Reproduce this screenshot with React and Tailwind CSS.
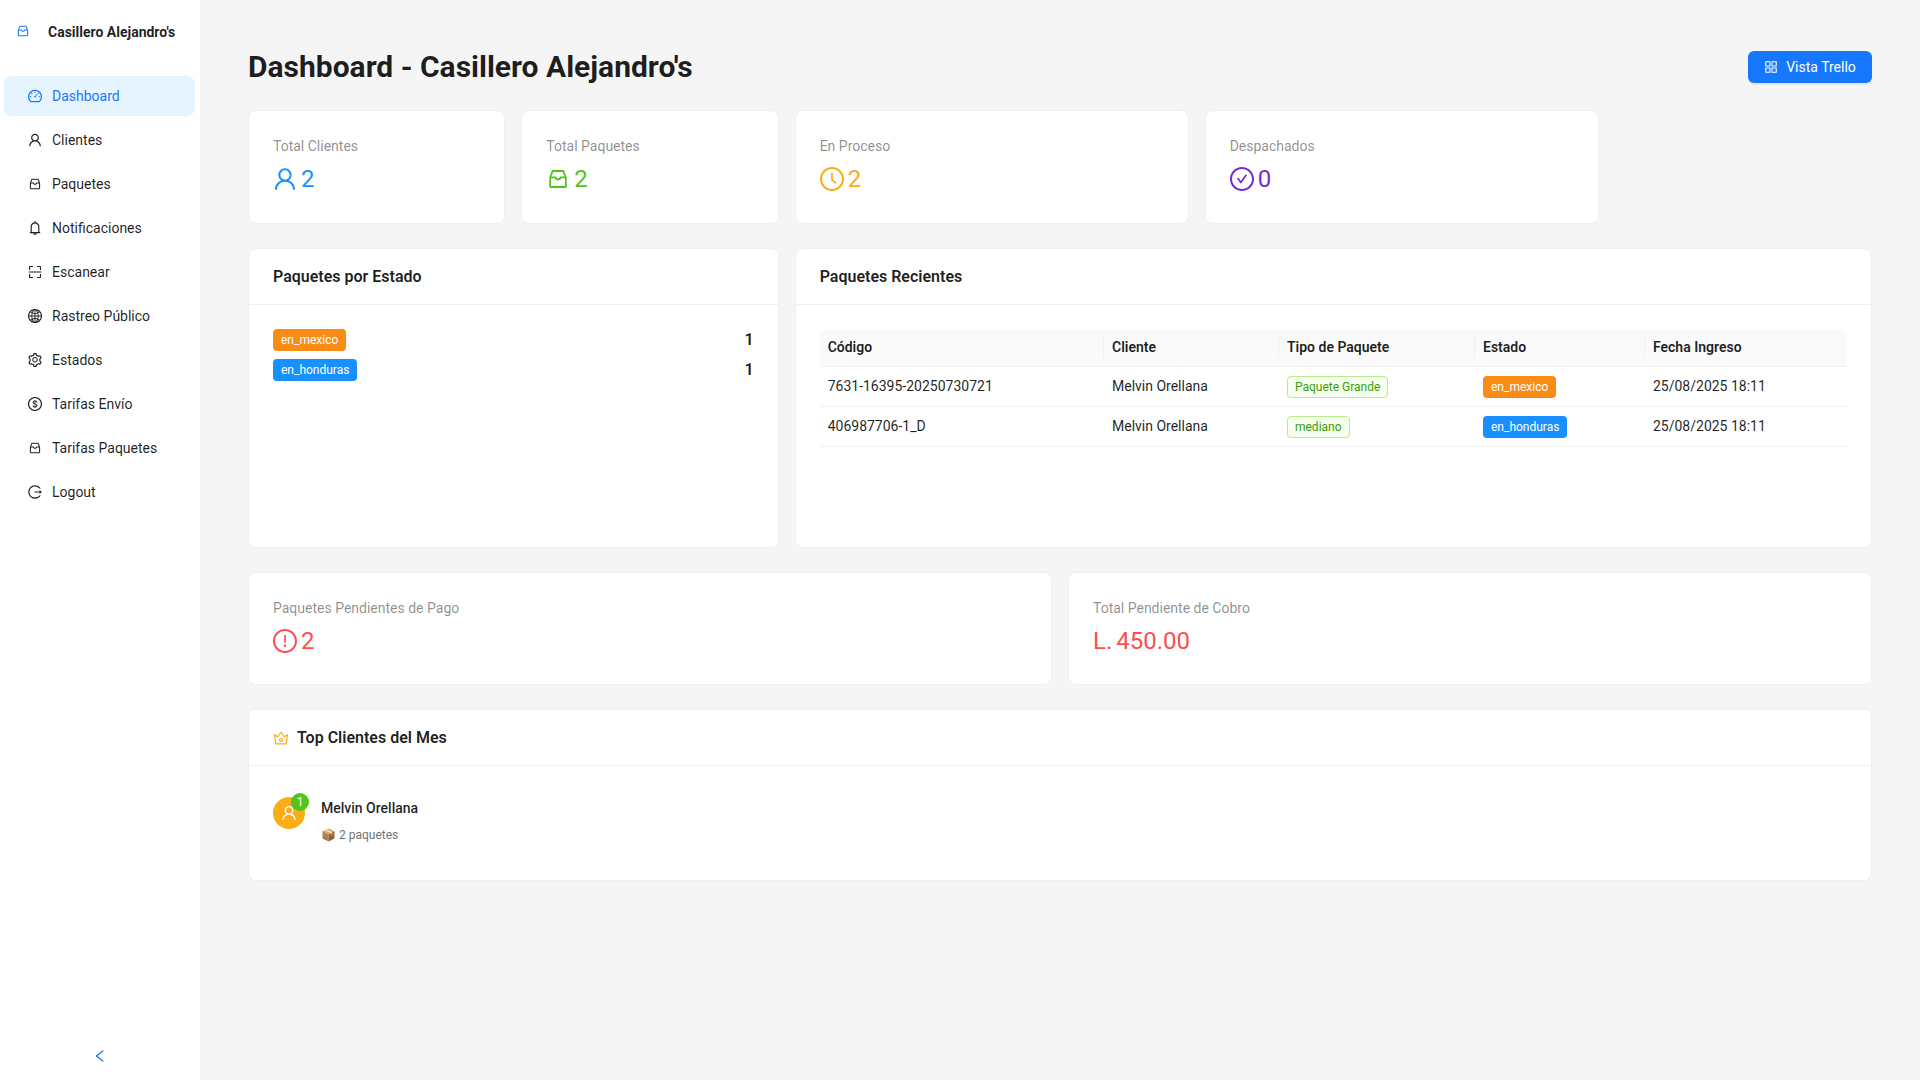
import React from "react";
import {
  AiOutlineDashboard, AiOutlineUser, AiOutlineInbox, AiOutlineBell, AiOutlineScan,
  AiOutlineGlobal, AiOutlineSetting, AiOutlineDollar, AiOutlineLogout, AiOutlineAppstore,
  AiOutlineClockCircle, AiOutlineCheckCircle, AiOutlineExclamationCircle, AiOutlineCrown, AiOutlineLeft,
} from "react-icons/ai";

const menu = [
  [AiOutlineDashboard, "Dashboard", "scale-[1.143]"],
  [AiOutlineUser, "Clientes", "scale-[1.143]"],
  [AiOutlineInbox, "Paquetes", ""],
  [AiOutlineBell, "Notificaciones", "scale-[1.143]"],
  [AiOutlineScan, "Escanear", "scale-[1.143]"],
  [AiOutlineGlobal, "Rastreo Público", "scale-[1.143]"],
  [AiOutlineSetting, "Estados", "scale-[1.143]"],
  [AiOutlineDollar, "Tarifas Envío", "scale-[1.143]"],
  [AiOutlineInbox, "Tarifas Paquetes", ""],
  [AiOutlineLogout, "Logout", "scale-[1.143]"],
];

function Sidebar() {
  return (
    <aside className="w-[200px] shrink-0 h-screen bg-white flex flex-col">
      <div className="h-[64px] flex items-center pl-[16px] gap-[18px]">
        <AiOutlineInbox className="text-[14px] text-[#1677ff] -mt-[2px]" />
        <span className="text-[14px] font-bold text-[#000000e0] whitespace-nowrap">Casillero Alejandro's</span>
      </div>
      <nav className="flex flex-col gap-[4px] ml-[4px] mr-[5px] mt-[12px]">
        {menu.map(([Icon, label, scale], i) => (
          <div
            key={label}
            className={`h-[40px] rounded-[8px] flex items-center pl-[24px] gap-[10px] text-[14px] ${
              i === 0 ? "bg-[#e6f4ff] text-[#1677ff]" : "text-[#000000e0]"
            }`}
          >
            <Icon className={`${scale} text-[14px]`} />
            <span>{label}</span>
          </div>
        ))}
      </nav>
      <div className="mt-auto h-[48px] flex items-center justify-center text-[#1677ff]">
        <AiOutlineLeft className="scale-[1.143] text-[14px]" />
      </div>
    </aside>
  );
}

function Card({ className = "", children }) {
  return (
    <div className={`bg-white rounded-[8px] border border-[#f0f0f0] ${className}`}>
      {children}
    </div>
  );
}

function Stat({ className, label, color, Icon, iconScale = "scale-[1.143]", prefix, value, pad = "p-[24px]" }) {
  return (
    <Card className={`${className} ${pad}`}>
      <div className="text-[14px] leading-[22px] text-[#00000073] mb-[4px]">{label}</div>
      <div className={`flex items-center leading-[37.7px] text-[24px] ${color}`}>
        {Icon && <Icon className={`${iconScale} text-[24px] mr-[4px] -mt-[2px]`} />}
        {prefix && <span className="mr-[4px]">{prefix}</span>}
        <span>{value}</span>
      </div>
    </Card>
  );
}

function Tag({ color, children }) {
  const cls = {
    orange: "bg-[#fa8c16] border-transparent text-white",
    blue: "bg-[#1890ff] border-transparent text-white",
    green: "bg-[#f6ffed] border-[#b7eb8f] text-[#389e0d]",
  }[color];
  return (
    <span className={`inline-block h-[22px] leading-[20px] px-[7px] text-[12px] rounded-[4px] border whitespace-nowrap ${cls}`}>
      {children}
    </span>
  );
}

function Head({ children }) {
  return (
    <div className="h-[56px] border-b border-[#f0f0f0] flex items-center px-[24px] gap-[8px] text-[16px] font-semibold text-[#000000e0]">
      {children}
    </div>
  );
}

const rows = [
  ["7631-16395-20250730721", "Melvin Orellana", "Paquete Grande", "en_mexico", "orange", "25/08/2025 18:11"],
  ["406987706-1_D", "Melvin Orellana", "mediano", "en_honduras", "blue", "25/08/2025 18:11"],
];
const cols = [
  ["Código", "w-[284.33px]"],
  ["Cliente", "w-[175px]"],
  ["Tipo de Paquete", "w-[196px]"],
  ["Estado", "w-[170px]"],
  ["Fecha Ingreso", "w-[202px]"],
];

function RecentTable() {
  const td = "h-[40px] px-[8px] py-0 leading-[22px] border-b border-[#f0f0f0]";
  return (
    <table className="w-full table-fixed text-[14px] text-[#000000e0] border-separate border-spacing-0">
      <thead>
        <tr>
          {cols.map(([c, w], i) => (
            <th
              key={c}
              className={`${w} relative text-left font-semibold bg-[#fafafa] px-[8px] py-[7.5px] leading-[22px] border-b border-[#f0f0f0] ${i === 0 ? "rounded-tl-[8px]" : ""} ${i === 4 ? "rounded-tr-[8px]" : ""}`}
            >
              {c}
              {i < 4 && <span className="absolute right-0 top-1/2 -translate-y-1/2 h-[22px] w-px bg-[#f0f0f0]" />}
            </th>
          ))}
        </tr>
      </thead>
      <tbody>
        {rows.map((r) => (
          <tr key={r[0]}>
            <td className={td}>{r[0]}</td>
            <td className={td}>{r[1]}</td>
            <td className={td}><div className="flex pt-[1px]"><Tag color="green">{r[2]}</Tag></div></td>
            <td className={td}><div className="flex pt-[1px]"><Tag color={r[4]}>{r[3]}</Tag></div></td>
            <td className={td}>{r[5]}</td>
          </tr>
        ))}
      </tbody>
    </table>
  );
}

export default function App() {
  const top = "px-[24px] pt-[24px] pb-[24.3px]";
  return (
    <div className="flex min-h-screen bg-[#f5f5f5] font-['Roboto',sans-serif] text-[#000000e0]">
      <Sidebar />
      <main className="flex-1 min-w-0 px-[48px] pt-[48px]">
        <div className="flex items-center justify-between mb-[24px]">
          <h1 className="text-[30px] leading-[38px] font-bold text-[#000000e0]">Dashboard - Casillero Alejandro's</h1>
          <button className="h-[32px] w-[124px] rounded-[6px] bg-[#1677ff] text-white text-[14px] flex items-center justify-center gap-[8px] shadow-[0_2px_0_rgba(5,145,255,0.1)]">
            <AiOutlineAppstore className="scale-[1.143] text-[14px]" />
            <span>Vista Trello</span>
          </button>
        </div>

        <div className="grid grid-cols-12 gap-x-[16px] gap-y-[24px]">
          <Stat className="col-span-2" pad={top} label="Total Clientes" color="text-[#1890ff]" Icon={AiOutlineUser} value="2" />
          <Stat className="col-span-2" pad={top} label="Total Paquetes" color="text-[#52c41a]" Icon={AiOutlineInbox} iconScale="" value="2" />
          <Stat className="col-span-3" pad={top} label="En Proceso" color="text-[#faad14]" Icon={AiOutlineClockCircle} value="2" />
          <Stat className="col-span-3" pad={top} label="Despachados" color="text-[#722ed1]" Icon={AiOutlineCheckCircle} value="0" />
          <div className="col-span-2" />

          <Card className="col-span-4 h-[299.7px]">
            <Head>Paquetes por Estado</Head>
            <div className="px-[24px] pt-[23.7px] flex flex-col gap-[8px]">
              <div className="flex items-center justify-between">
                <Tag color="orange">en_mexico</Tag>
                <span className="font-semibold text-[16px] leading-[22px]">1</span>
              </div>
              <div className="flex items-center justify-between">
                <Tag color="blue">en_honduras</Tag>
                <span className="font-semibold text-[16px] leading-[22px]">1</span>
              </div>
            </div>
          </Card>

          <Card className="col-span-8 h-[299.7px]">
            <Head>Paquetes Recientes</Head>
            <div className="px-[24px] pt-[23.7px]"><RecentTable /></div>
          </Card>

          <Stat className="col-span-6" label="Paquetes Pendientes de Pago" color="text-[#ff4d4f]" Icon={AiOutlineExclamationCircle} value="2" />
          <Stat className="col-span-6" label="Total Pendiente de Cobro" color="text-[#ff4d4f]" prefix="L." value="450.00" />

          <Card className="col-span-12 h-[171.6px]">
            <Head>
              <AiOutlineCrown className="scale-[1.143] text-[16px] text-[#faad14]" />
              <span>Top Clientes del Mes</span>
            </Head>
            <div className="px-[24px] pt-[30.6px] flex gap-[16px]">
              <div className="relative w-[32px] h-[32px] rounded-full bg-[#faad14] text-white flex items-center justify-center shrink-0">
                <AiOutlineUser className="scale-[1.143] text-[16px]" />
                <span className="absolute -top-[4px] -right-[4px] w-[18px] h-[18px] rounded-full bg-[#52c41a] text-[12px] leading-[18px] text-center">1</span>
              </div>
              <div>
                <div className="text-[14px] leading-[22px] font-medium mb-[5px]">Melvin Orellana</div>
                <div className="text-[12px] leading-[22px] text-[#737373]">📦 2 paquetes</div>
              </div>
            </div>
          </Card>
        </div>
      </main>
    </div>
  );
}
